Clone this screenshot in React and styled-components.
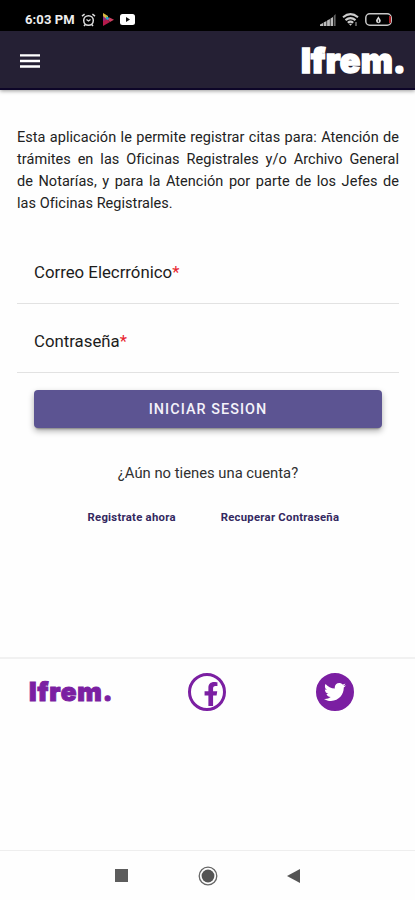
import styled, { createGlobalStyle } from "styled-components";
import { FaFacebookF, FaTwitter } from "react-icons/fa";

const GlobalStyle = createGlobalStyle`
  * {
    box-sizing: border-box;
  }
  body {
    margin: 0;
    background: #fefefe;
    color: #222;
    font-family: Roboto, sans-serif;
  }
`;

const Screen = styled.div`
  display: flex;
  flex-direction: column;
  height: 900px;
  overflow: hidden;
`;

////////////////////////////////////////////////
// Barra de estado
const StatusBar = styled.div`
  display: flex;
  align-items: center;
  flex: none;
  height: 31px;
  padding: 8px 23px 0 25px;
  background: #000;
  color: #eee;
`;

const Clock = styled.span`
  width: 56px;
  font-size: 13px;
  font-weight: 700;
  line-height: 15px;
  letter-spacing: 0.1px;
  white-space: nowrap;
`;

const StatusIcons = styled.div`
  display: flex;
  align-items: center;
  gap: ${(props) => props.$gap};
  margin-left: ${(props) => (props.$end ? "auto" : "0")};
`;

////////////////////////////////////////////////
// Encabezado
const Header = styled.header`
  display: flex;
  align-items: center;
  justify-content: space-between;
  flex: none;
  height: 59px;
  padding: 3px 9px 0 20px;
  background: #252034;
  border-bottom: 2px solid #0d0528;
  box-shadow: 0 1px 4px rgba(0, 0, 0, 0.4);
`;

const MenuButton = styled.button`
  display: flex;
  padding: 0;
  border: 0;
  background: none;
`;

const Logo = styled.span`
  font-family: Inter, sans-serif;
  font-weight: 900;
  font-size: ${(props) => props.$size}px;
  line-height: 1;
  letter-spacing: ${(props) => props.$spacing}px;
  color: ${(props) => props.$color};
  -webkit-text-stroke: ${(props) => props.$stroke}px ${(props) => props.$color};
`;

////////////////////////////////////////////////
// Formulario
const Content = styled.main`
  flex: none;
  height: 567px;
  padding: 37px 16px 0 17px;
`;

const Intro = styled.p`
  margin: 0;
  font-size: 14.5px;
  line-height: 22px;
  letter-spacing: 0.04px;
  text-align: justify;
`;

const Field = styled.label`
  display: block;
  height: 69px;
  padding: 26px 17px 0;
  border-bottom: 1px solid #e2e2e2;
  font-size: 16.8px;
  line-height: 22px;
  color: #1c1c1c;
`;

const Fields = styled.div`
  padding-top: 20px;
`;

const Required = styled.span`
  color: #e8232d;
`;

const LoginButton = styled.button`
  display: block;
  width: 348px;
  height: 38px;
  margin: 17px 0 0 17px;
  padding: 0;
  border: 0;
  border-radius: 4px;
  background: #5c5492;
  box-shadow: 0 3px 2px -2px rgba(0, 0, 0, 0.3), 0 3px 6px rgba(0, 0, 0, 0.32);
  color: #f4f2fa;
  font-family: inherit;
  font-size: 14.4px;
  font-weight: 500;
  letter-spacing: 1.05px;
`;

const Question = styled.p`
  margin: 34px 0 0;
  font-size: 14.8px;
  line-height: 22px;
  text-align: center;
  color: #303030;
`;

const Links = styled.div`
  display: flex;
  gap: 45px;
  padding: 26px 0 0 70.5px;
`;

const TextLink = styled.a`
  font-size: 11.3px;
  font-weight: 700;
  line-height: 16px;
  letter-spacing: 0.27px;
  white-space: nowrap;
  color: #332860;
`;

////////////////////////////////////////////////
// Pie y barra de navegacion
const Footer = styled.footer`
  display: flex;
  align-items: flex-start;
  flex: 1;
  padding: 14px 0 0 29px;
  border-top: 2px solid #f1f1f1;
`;

const FooterLogo = styled.div`
  flex: none;
  width: 159px;
  padding-top: 6px;
`;

const Round = styled.a`
  display: flex;
  align-items: center;
  justify-content: center;
  flex: none;
  width: ${(props) => props.$size}px;
  height: ${(props) => props.$size}px;
  border: 3px solid #7b1fa2;
  border-radius: 50%;
  margin-right: 90px;
  background: ${(props) => (props.$filled ? "#7b1fa2" : "transparent")};
  color: ${(props) => (props.$filled ? "#fff" : "#7b1fa2")};
`;

const FacebookMark = styled(FaFacebookF)`
  flex: none;
  margin: 3px 0 0 8px;
`;

const NavBar = styled.nav`
  display: flex;
  align-items: center;
  justify-content: space-between;
  flex: none;
  height: 50px;
  padding: 0 115px;
  border-top: 1px solid #eee;
`;

function AlarmIcon() {
  return (
    <svg width="15" height="14" viewBox="0 0 15 14" fill="none" stroke="#ddd" strokeWidth="1.5">
      <circle cx="7.5" cy="7.5" r="4.8" />
      <path d="M1 3.2 3.6 1.2M14 3.2 11.4 1.2M3 13l1.3-1.5M12 13l-1.3-1.5" />
      <path d="M5.5 6.5 7.5 8l2-1.5" strokeWidth="1.2" />
    </svg>
  );
}

function PlayIcon() {
  return (
    <svg width="12" height="13" viewBox="0 0 12 13">
      <path d="M1 0v6.5h5L6 3z" fill="#d8b73e" />
      <path d="M1 3v7l4-3.5z" fill="#8a2885" />
      <path d="M4 3.5 8 5 6 8 4 6z" fill="#24a9c8" />
      <path d="M1 13V8l4-1.5L8 9z" fill="#b61a4b" />
      <path d="M7.5 4.5 12 6.8 8 9 6 6.8z" fill="#cb4060" />
    </svg>
  );
}

function YoutubeIcon() {
  return (
    <svg width="15" height="11" viewBox="0 0 15 11">
      <rect width="15" height="11" rx="2.5" fill="#fff" />
      <path d="M6 3v5l4-2.5z" fill="#111" />
    </svg>
  );
}

function SignalIcon() {
  return (
    <svg width="16" height="12" viewBox="0 0 16 12" fill="#bbb">
      <path d="M0 10.5 3 9v3H0zM3.6 8.5 6.5 7v5H3.6zM7.1 6.5 9.9 5v7H7.1zM10.5 4.4 13 3v9h-2.5z" />
      <path d="M13.7 2 15.6 0v12h-1.9z" fill="#666" />
    </svg>
  );
}

function WifiIcon() {
  return (
    <svg width="17" height="14" viewBox="0 0 17 14" fill="none" stroke="#ccc" strokeWidth="2.1">
      <path d="M1 4.2Q8.5-1.8 16 4.2M3.5 7.1Q8.5 3 13.5 7.1M5.8 9.8Q8.5 7.5 11.2 9.8" />
      <path d="m8.5 12.7-1.7-2h3.4z" fill="#ccc" stroke="none" />
      <path d="M14 9v4" stroke="#777" strokeWidth="1.5" />
    </svg>
  );
}

function BatteryIcon() {
  return (
    <svg width="27" height="13" viewBox="0 0 27 13" fill="none">
      <rect x="0.8" y="0.8" width="25.4" height="11.4" rx="4" stroke="#c8c8c8" strokeWidth="1.5" />
      <path d="M25 3v7" stroke="#a82024" strokeWidth="2" />
      <path d="M13.4 3.2C12.6 5 11 6.3 11 7.8a2.4 2.4 0 0 0 4.8 0c0-1.5-1.6-2.8-2.4-4.6z" fill="#ddd" />
      <path d="M13.4 6.5v2.7" stroke="#222" />
    </svg>
  );
}

const App = function () {
  return (
    <>
      <GlobalStyle />
      <Screen>
        <StatusBar>
          <Clock>6:03 PM</Clock>
          <StatusIcons $gap="6px">
            <AlarmIcon />
            <PlayIcon />
            <YoutubeIcon />
          </StatusIcons>
          <StatusIcons $gap="6px" $end>
            <SignalIcon />
            <WifiIcon />
            <BatteryIcon />
          </StatusIcons>
        </StatusBar>

        <Header>
          <MenuButton aria-label="Menu">
            <svg width="20" height="14" viewBox="0 0 20 14">
              <path d="M0 1.3h20M0 7h20M0 12.5h20" stroke="#fff" strokeWidth="2.3" />
            </svg>
          </MenuButton>
          <Logo $size={34} $spacing={0.3} $stroke={1.5} $color="#fff">Ifrem.</Logo>
        </Header>

        <Content>
          <Intro>
            Esta aplicación le permite registrar citas para: Atención de trámites en las Oficinas
            Registrales y/o Archivo General de&nbsp;Notarías, y para la Atención por parte de los
            Jefes de las&nbsp;Oficinas Registrales.
          </Intro>
          <Fields>
            <Field>
              Correo Elecrrónico<Required>*</Required>
            </Field>
            <Field>
              Contraseña<Required>*</Required>
            </Field>
          </Fields>
          <LoginButton>INICIAR SESION</LoginButton>
          <Question>¿Aún no tienes una cuenta?</Question>
          <Links>
            <TextLink>Registrate ahora</TextLink>
            <TextLink>Recuperar Contraseña</TextLink>
          </Links>
        </Content>

        <Footer>
          <FooterLogo>
            <Logo $size={26} $spacing={0.9} $stroke={1} $color="#7b1fa2">Ifrem.</Logo>
          </FooterLogo>
          <Round $size={38}>
            <FacebookMark size={24} />
          </Round>
          <Round $size={38} $filled>
            <FaTwitter size={22} />
          </Round>
        </Footer>

        <NavBar>
          <svg width="13" height="13" viewBox="0 0 13 13">
            <rect width="13" height="13" fill="#5c5c5c" />
          </svg>
          <svg width="20" height="20" viewBox="0 0 20 20">
            <circle cx="10" cy="10" r="8.8" fill="none" stroke="#666" strokeWidth="1.3" />
            <circle cx="10" cy="10" r="6.4" fill="#555" />
          </svg>
          <svg width="13" height="14" viewBox="0 0 13 14">
            <path d="M13 0v14L0 7z" fill="#555" />
          </svg>
        </NavBar>
      </Screen>
    </>
  );
};

export default App;
